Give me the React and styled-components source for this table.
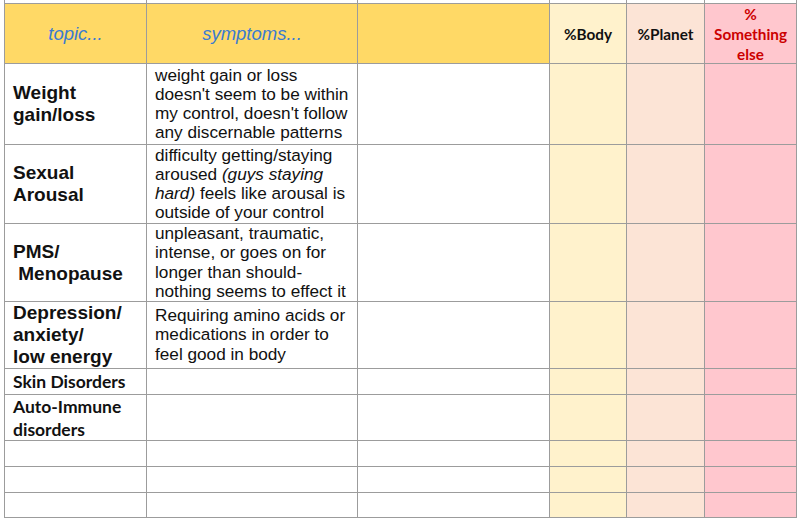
import React from "react";
import styled, { createGlobalStyle } from "styled-components";

const GlobalStyle = createGlobalStyle`
  html, body {
    margin: 0;
    padding: 0;
    background: #ffffff;
  }
`;

const tones = {
  white: "#ffffff",
  header: "#ffd966",
  body: "#fff2cc",
  planet: "#fce4d6",
  other: "#ffc7ce",
};

const rows = [
  {
    label: ["Weight", "gain/loss"],
    symptoms: [
      "weight gain or loss",
      "doesn't seem to be within",
      "my control, doesn't follow",
      "any discernable patterns",
    ],
  },
  {
    label: ["Sexual", "Arousal"],
    symptoms: [
      "difficulty getting/staying",
      <>aroused <em>(guys staying</em></>,
      <><em>hard)</em> feels like arousal is</>,
      "outside of your control",
    ],
  },
  {
    label: ["PMS/", "\u00a0Menopause"],
    symptoms: [
      "unpleasant, traumatic,",
      "intense, or goes on for",
      "longer than should-",
      "nothing seems to effect it",
    ],
  },
  {
    label: ["Depression/", "anxiety/", "low energy"],
    symptoms: [
      "Requiring amino acids or",
      "medications in order to",
      "feel good in body",
    ],
  },
  { label: ["Skin Disorders"], small: true },
  { label: ["Auto-Immune", "disorders"], small: true },
  {},
  {},
  {},
];

const Sheet = styled.div`
  display: grid;
  grid-template-columns: 141px 210px 191px 76px 77px 91px;
  grid-template-rows: 3px 59px 80px 78px 77px 66px 25px 45px 25px 25px 24px;
  gap: 1px;
  padding: 0 1px 1px 1px;
  margin-left: 4px;
  width: fit-content;
  background: #9c9c9c;
`;

const Cell = styled.div`
  background: ${(p) => tones[p.$tone || "white"]};
  display: flex;
  flex-direction: column;
  justify-content: center;
  align-items: ${(p) => (p.$center ? "center" : "flex-start")};
  text-align: ${(p) => (p.$center ? "center" : "left")};
  padding: 0 8px;
  overflow: hidden;
  white-space: nowrap;
`;

const HeadLabel = styled.span`
  font-family: "Liberation Sans", Arial, sans-serif;
  font-style: italic;
  font-size: 18.5px;
  color: #3b7bd0;
`;

const PctLabel = styled.span`
  font-family: Lato, "Liberation Sans", sans-serif;
  font-weight: 700;
  font-size: 15.3px;
  line-height: 20px;
  color: ${(p) => (p.$alert ? "#cc0000" : "#111111")};
`;

const Topic = styled.span`
  display: block;
  font-family: ${(p) =>
    p.$small ? 'Lato, "Liberation Sans", sans-serif' : '"Liberation Sans", Arial, sans-serif'};
  font-weight: 700;
  font-size: ${(p) => (p.$small ? "17.5px" : "19px")};
  line-height: ${(p) => (p.$small ? "23px" : "22px")};
  color: #111111;
`;

const Symptom = styled.span`
  display: block;
  font-family: "Liberation Sans", Arial, sans-serif;
  font-size: 17.2px;
  line-height: 19.2px;
  color: #111111;

  em {
    font-style: italic;
  }
`;

const App = () => {
  return (
    <>
      <GlobalStyle />
      <Sheet>
        {/* sliver of the row above the header */}
        <Cell />
        <Cell />
        <Cell />
        <Cell />
        <Cell />
        <Cell />

        <Cell $tone="header" $center>
          <HeadLabel>topic...</HeadLabel>
        </Cell>
        <Cell $tone="header" $center>
          <HeadLabel>symptoms...</HeadLabel>
        </Cell>
        <Cell $tone="header" />
        <Cell $tone="body" $center>
          <PctLabel>%Body</PctLabel>
        </Cell>
        <Cell $tone="planet" $center>
          <PctLabel>%Planet</PctLabel>
        </Cell>
        <Cell $tone="other" $center>
          <PctLabel $alert>%</PctLabel>
          <PctLabel $alert>Something</PctLabel>
          <PctLabel $alert>else</PctLabel>
        </Cell>

        {rows.map((row, i) => (
          <React.Fragment key={i}>
            <Cell>
              {(row.label || []).map((l, j) => (
                <Topic key={j} $small={row.small}>
                  {l}
                </Topic>
              ))}
            </Cell>
            <Cell>
              {(row.symptoms || []).map((s, j) => (
                <Symptom key={j}>{s}</Symptom>
              ))}
            </Cell>
            <Cell />
            <Cell $tone="body" />
            <Cell $tone="planet" />
            <Cell $tone="other" />
          </React.Fragment>
        ))}
      </Sheet>
    </>
  );
};

export default App;
